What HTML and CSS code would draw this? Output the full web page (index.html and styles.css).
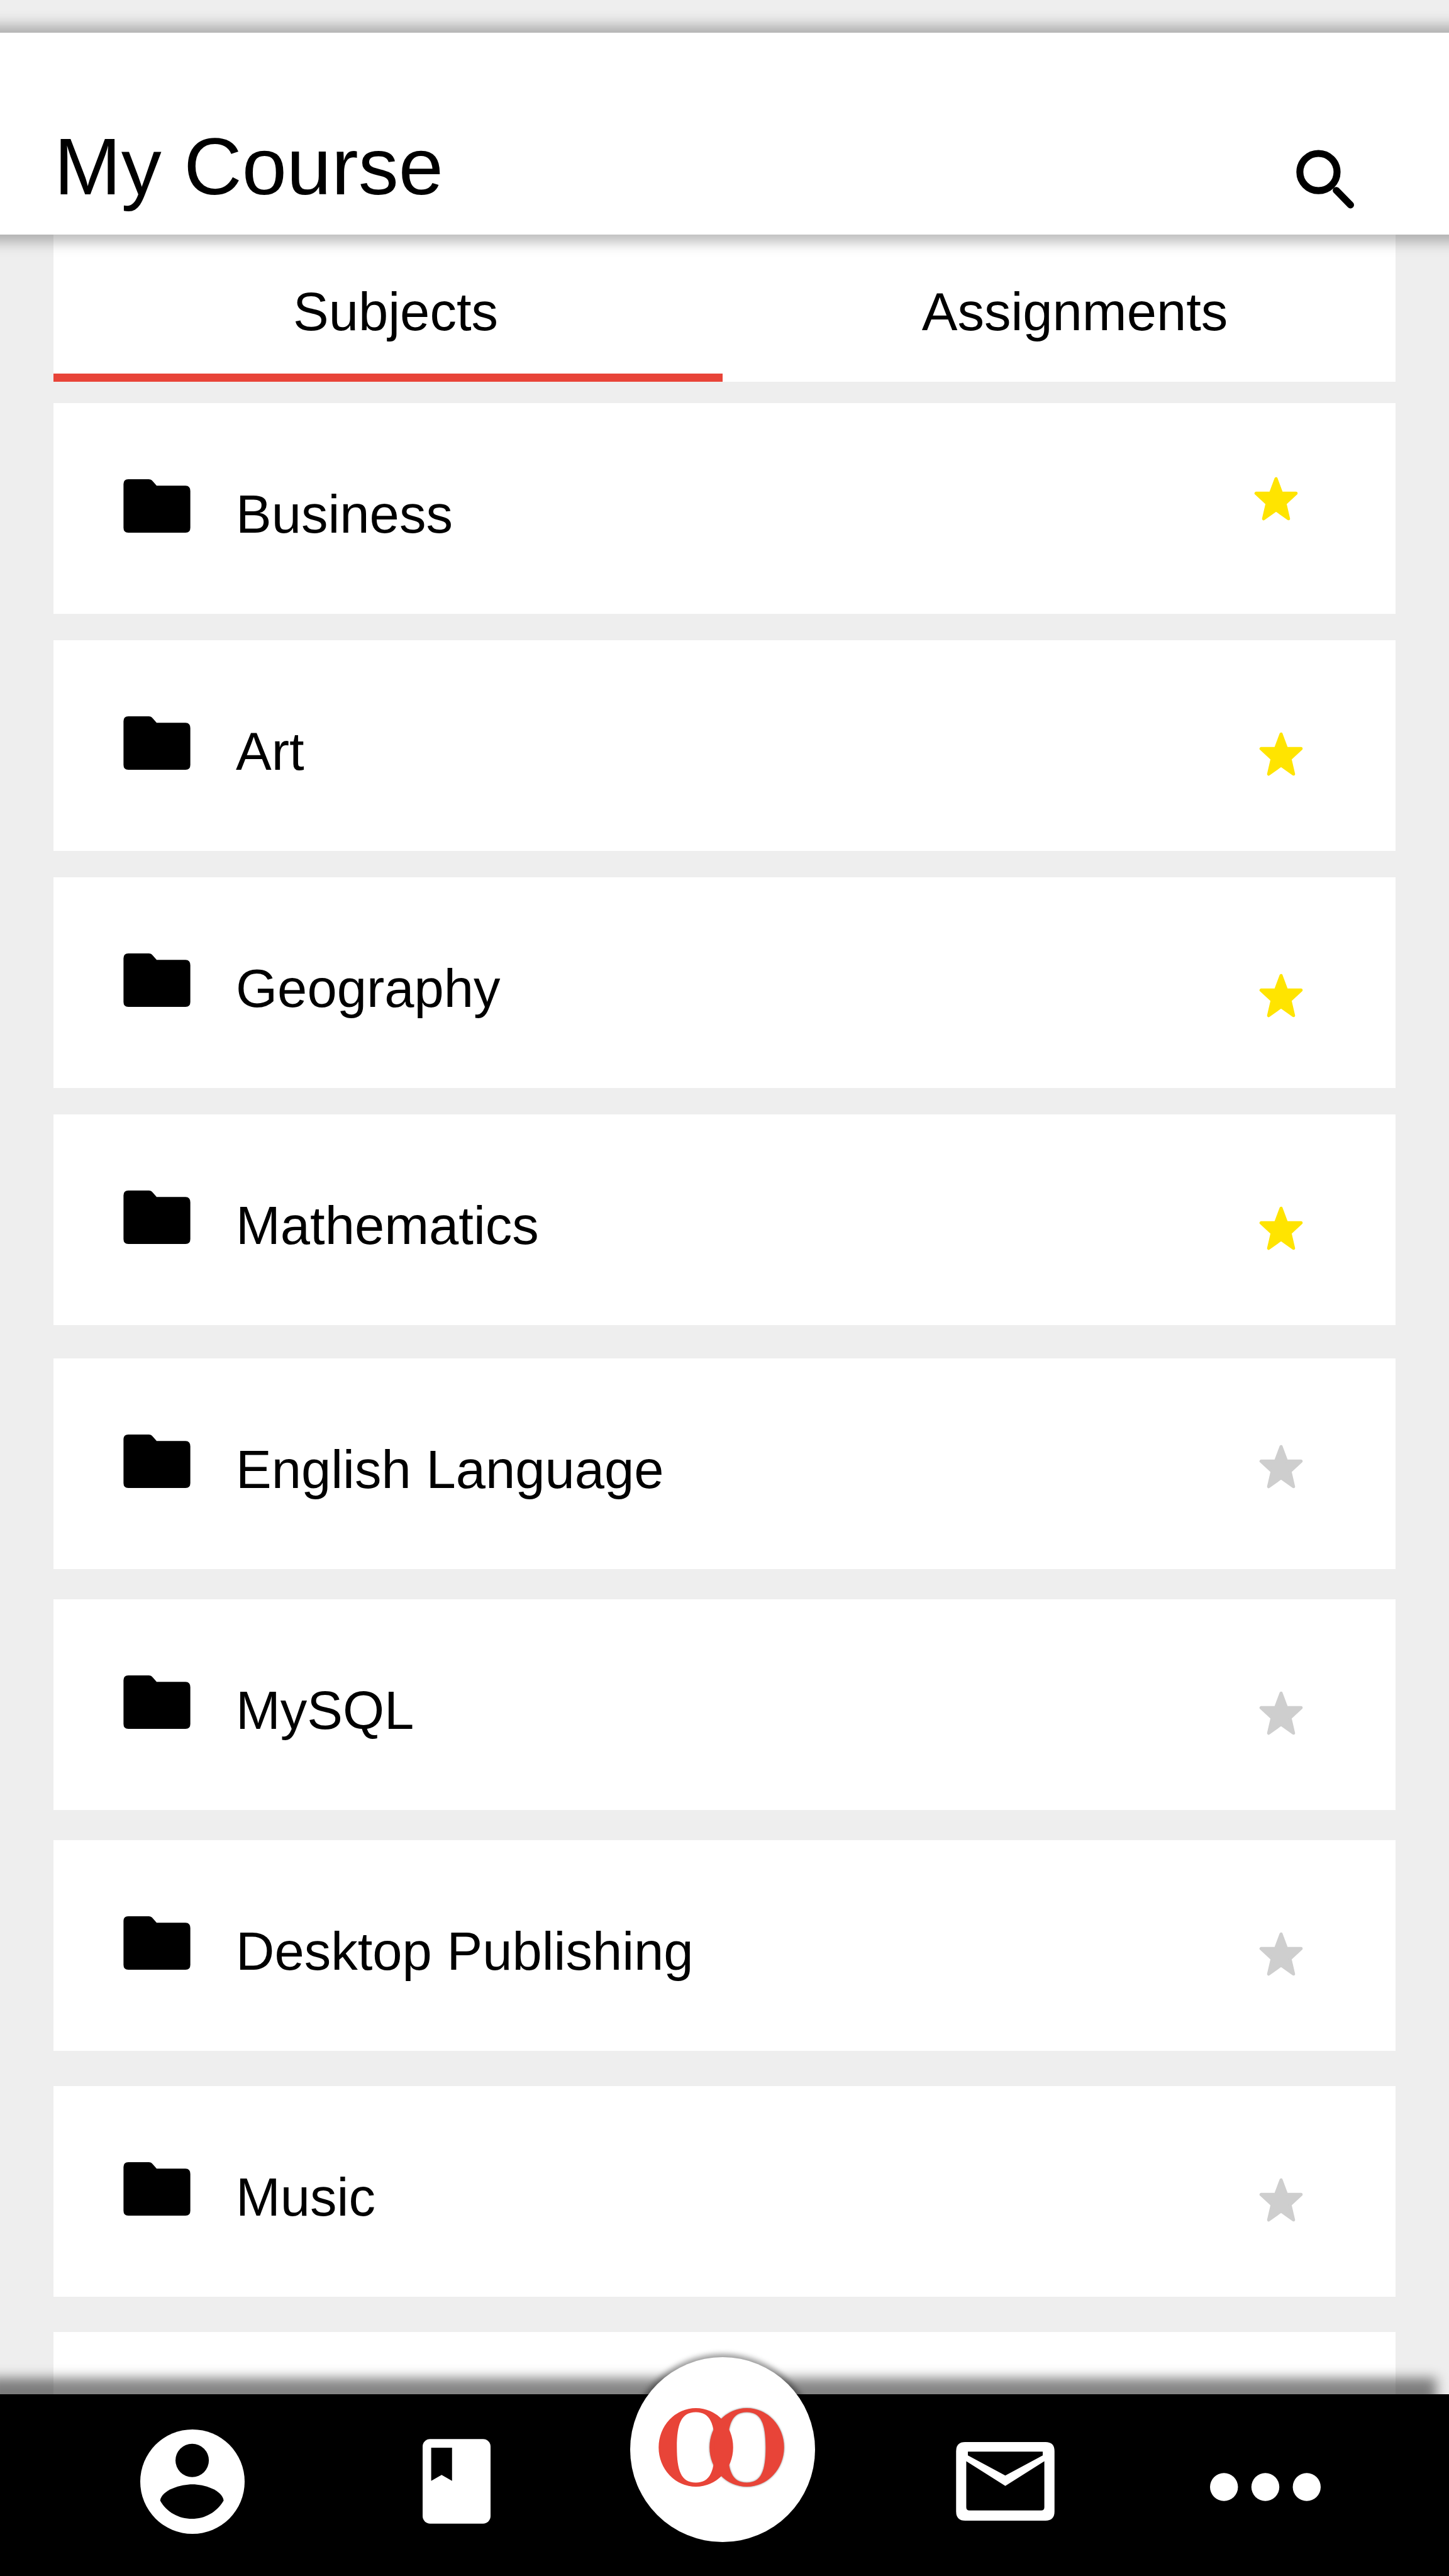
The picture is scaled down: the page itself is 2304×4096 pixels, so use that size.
FILE: index.html
```html
<!DOCTYPE html>
<html lang="en">
<head>
<meta charset="utf-8">
<meta name="viewport" content="width=device-width, initial-scale=1">
<title>My Course</title>
<link rel="stylesheet" href="styles.css">
</head>
<body>
<svg class="sprite" aria-hidden="true">
  <symbol id="folder" viewBox="0 0 125 100">
    <path d="M9 0H47Q52 0 55 4L62 12H116Q125 12 125 22V91Q125 100 116 100H9Q0 100 0 91V9Q0 0 9 0Z"/>
  </symbol>
  <symbol id="star" viewBox="0 0 84 84">
    <path d="M42 5L52 32H79L58.500 51L65 79L42 62.500L19 79L25.500 51L5 32H32Z" stroke="currentColor" stroke-width="6" stroke-linejoin="round"/>
  </symbol>
</svg>
<div class="app">
  <header class="header">
    <h1 class="title">My Course</h1>
    <button class="search" type="button" aria-label="Search">
      <svg class="search-icon" viewBox="0 0 112 112" aria-hidden="true">
        <circle cx="42.500" cy="41.500" r="34.500"/>
        <path d="M75.500 75.500L102 102.500"/>
      </svg>
    </button>
  </header>

  <main class="content">
    <nav class="tabs" aria-label="Course sections">
      <a class="tab tab-subjects" href="#subjects" aria-current="page">Subjects</a>
      <a class="tab tab-assignments" href="#assignments">Assignments</a>
    </nav>

    <ul class="subjects" id="subjects">
      <li class="card">
        <svg class="folder" aria-hidden="true"><use href="#folder"/></svg>
        <span class="name">Business</span>
        <button class="star star-on star-high" type="button" aria-label="Favourite Business" aria-pressed="true"><svg aria-hidden="true"><use href="#star"/></svg></button>
      </li>
      <li class="card">
        <svg class="folder" aria-hidden="true"><use href="#folder"/></svg>
        <span class="name">Art</span>
        <button class="star star-on" type="button" aria-label="Favourite Art" aria-pressed="true"><svg aria-hidden="true"><use href="#star"/></svg></button>
      </li>
      <li class="card">
        <svg class="folder" aria-hidden="true"><use href="#folder"/></svg>
        <span class="name">Geography</span>
        <button class="star star-on star-low" type="button" aria-label="Favourite Geography" aria-pressed="true"><svg aria-hidden="true"><use href="#star"/></svg></button>
      </li>
      <li class="card">
        <svg class="folder" aria-hidden="true"><use href="#folder"/></svg>
        <span class="name">Mathematics</span>
        <button class="star star-on" type="button" aria-label="Favourite Mathematics" aria-pressed="true"><svg aria-hidden="true"><use href="#star"/></svg></button>
      </li>
    </ul>

    <ul class="subjects subjects-other">
      <li class="card">
        <svg class="folder" aria-hidden="true"><use href="#folder"/></svg>
        <span class="name">English Language</span>
        <button class="star star-raised" type="button" aria-label="Favourite English Language" aria-pressed="false"><svg aria-hidden="true"><use href="#star"/></svg></button>
      </li>
      <li class="card">
        <svg class="folder" aria-hidden="true"><use href="#folder"/></svg>
        <span class="name">MySQL</span>
        <button class="star" type="button" aria-label="Favourite MySQL" aria-pressed="false"><svg aria-hidden="true"><use href="#star"/></svg></button>
      </li>
      <li class="card">
        <svg class="folder" aria-hidden="true"><use href="#folder"/></svg>
        <span class="name">Desktop Publishing</span>
        <button class="star" type="button" aria-label="Favourite Desktop Publishing" aria-pressed="false"><svg aria-hidden="true"><use href="#star"/></svg></button>
      </li>
    </ul>

    <ul class="subjects subjects-more">
      <li class="card">
        <svg class="folder" aria-hidden="true"><use href="#folder"/></svg>
        <span class="name">Music</span>
        <button class="star" type="button" aria-label="Favourite Music" aria-pressed="false"><svg aria-hidden="true"><use href="#star"/></svg></button>
      </li>
      <li class="card"></li>
    </ul>
  </main>

  <nav class="bottom-nav" aria-label="Main">
    <a class="nav-item" href="#profile" aria-label="Profile">
      <svg class="icon-profile" viewBox="0 0 194 194" aria-hidden="true">
        <circle cx="97" cy="97" r="97" fill="#fff"/>
        <circle cx="96.500" cy="57.500" r="31"/>
        <path d="M37 132C40 112 76 102 97 102S152 112 155 132C142 154 120 166 96 166S49 154 37 132Z"/>
      </svg>
    </a>
    <a class="nav-item" href="#library" aria-label="Library">
      <svg class="icon-book" viewBox="0 0 127 158" aria-hidden="true">
        <rect width="127" height="158" rx="14" fill="#fff"/>
        <path d="M16 16H55V78L35.500 67L16 78Z"/>
      </svg>
    </a>
    <a class="nav-home" href="#home" aria-label="Home">
      <svg class="logo" viewBox="0 0 702 440" aria-hidden="true">
        <path class="ring ring-back" fill-rule="evenodd" d="M285 220A208.500 220 0 0 1 702 220A208.500 220 0 0 1 285 220ZM493 23C411 23 387 90 387 220S411 417 493 417S599 350 599 220S575 23 493 23Z"/>
        <path class="ring" fill-rule="evenodd" d="M0 220A208.500 220 0 0 1 417 220A208.500 220 0 0 1 0 220ZM208 23C126 23 102 90 102 220S126 417 208 417S314 350 314 220S290 23 208 23Z"/>
      </svg>
    </a>
    <a class="nav-item" href="#messages" aria-label="Messages">
      <svg class="icon-mail" viewBox="0 0 184 147" aria-hidden="true">
        <path fill="#fff" fill-rule="evenodd" d="M17 0H167Q184 0 184 17V130Q184 147 167 147H17Q0 147 0 130V17Q0 0 17 0ZM22 18V25L92 62.500L162 25V18ZM19 36V122Q19 128 25 128H159Q165 128 165 122V36L92 82Z"/>
      </svg>
    </a>
    <a class="nav-item" href="#more" aria-label="More">
      <svg class="icon-more" viewBox="0 0 206 72" aria-hidden="true">
        <circle cx="26" cy="46" r="26" fill="#fff"/>
        <circle cx="103" cy="46" r="26" fill="#fff"/>
        <circle cx="180" cy="46" r="26" fill="#fff"/>
      </svg>
    </a>
  </nav>
</div>
</body>
</html>
```
FILE: styles.css
```css
* {
  box-sizing: border-box;
}

body {
  margin: 0;
  background: #eeeeee;
  color: #000;
  font-family: "Liberation Sans", Arial, sans-serif;
  font-size: 85px;
  line-height: 85px;
}

a {
  color: inherit;
  text-decoration: none;
}

button {
  margin: 0;
  padding: 0;
  border: 0;
  background: none;
  color: inherit;
  cursor: pointer;
}

svg {
  display: block;
}

ul {
  margin: 0;
  padding: 0;
  list-style: none;
}

.sprite {
  position: absolute;
  width: 0;
  height: 0;
}

.app {
  display: flex;
  flex-direction: column;
  height: 100vh;
  overflow: hidden;
}

/* Header */

.header {
  position: relative;
  z-index: 1;
  display: flex;
  justify-content: space-between;
  flex: none;
  margin-top: 52px;
  padding: 0 148px 0 86px;
  background: #fff;
}

/* Runs past both sides so that the shadow stays even to the window's edge */
.header::before {
  content: "";
  position: absolute;
  z-index: -1;
  inset: 0 -60px;
  background: #fff;
  box-shadow: 0 0 20px 12px rgba(0, 0, 0, 0.27);
}

.title {
  margin: 0;
  padding: 149px 0 44px;
  font-size: 128px;
  font-weight: 400;
  line-height: 128px;
}

.search {
  align-self: flex-end;
  margin-bottom: 39px;
}

.search-icon {
  width: 96px;
  height: 96px;
  fill: none;
  stroke: #000;
  stroke-width: 13;
  stroke-linecap: round;
}

/* Tabs */

.content {
  flex: 1;
  min-height: 0;
  padding: 0 85px;
  overflow: hidden;
}

.tabs {
  display: grid;
  grid-template-columns: 1064fr 1070fr;
  margin-bottom: 34px;
  background: #fff;
}

.tab {
  padding: 80px 0 56px;
  border-bottom: 13px solid transparent;
  text-align: center;
}

.tab[aria-current] {
  border-color: #e84438;
}

.tab-subjects {
  padding-left: 24px;
}

.tab-assignments {
  padding-left: 50px;
}

/* Subject list */

.subjects {
  display: grid;
  gap: 42px;
}

.subjects-other {
  gap: 48px;
  margin-top: 53px;
}

.subjects-more {
  gap: 56px;
  margin-top: 56px;
}

.card {
  display: flex;
  align-items: flex-start;
  height: 335px;
  padding: 0 146px 0 111px;
  background: #fff;
}

.folder {
  flex: none;
  width: 107px;
  height: 85px;
  margin: 121px 72px 0 0;
}

.name {
  flex: 1;
  margin-top: 134px;
}

.star {
  margin-top: 145px;
  color: #cecece;
}

.star svg {
  width: 72px;
  height: 72px;
  fill: currentColor;
}

.star-on {
  color: #ffe400;
}

.star-high {
  margin-top: 116px;
  margin-right: 8px;
}

.star-raised {
  margin-top: 136px;
}

.star-low {
  margin-top: 152px;
}

/* Bottom navigation */

.bottom-nav {
  position: relative;
  z-index: 1;
  display: grid;
  grid-template-columns: 420fr 420fr 426fr 473fr 354fr;
  flex: none;
  height: 289px;
  padding: 0 115px 0 96px;
  background: #000;
  box-shadow: -20px -26px 18px rgba(0, 0, 0, 0.48);
}

.nav-item {
  display: flex;
  align-items: center;
  justify-content: center;
  padding-bottom: 12px;
}

.icon-profile {
  width: 166px;
  height: 166px;
}

.icon-book {
  width: 108px;
  height: 135px;
}

.icon-mail {
  width: 157px;
  height: 125px;
}

.icon-more {
  width: 176px;
  height: 62px;
}

.nav-home {
  display: flex;
  align-items: center;
  justify-content: center;
  align-self: start;
  justify-self: center;
  width: 294px;
  height: 294px;
  margin-top: -59px;
  padding: 0 4px 8px 0;
  border-radius: 50%;
  background: #fff;
  box-shadow: 0 0 8px 5px rgba(0, 0, 0, 0.4);
}

.logo {
  width: 200px;
  height: 125px;
  overflow: visible;
}

.ring {
  fill: #e84438;
}

.ring-back {
  filter: drop-shadow(0 0 5px rgba(0, 0, 0, 0.5));
}
```
